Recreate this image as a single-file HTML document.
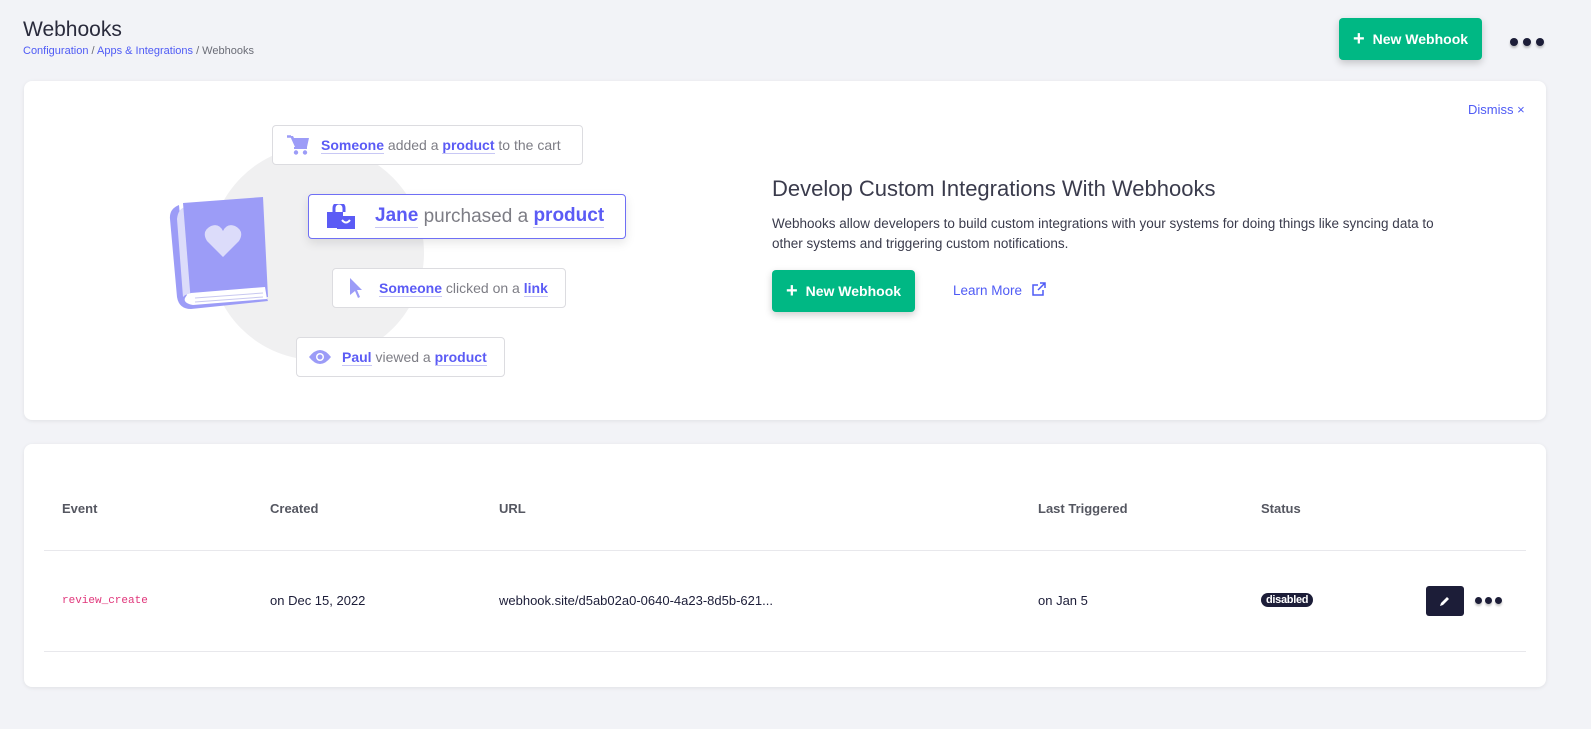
<!DOCTYPE html>
<html><head><style>
*{box-sizing:border-box;margin:0;padding:0}
body{width:1591px;height:729px;background:#f2f3f7;font-family:"Liberation Sans",sans-serif;position:relative;overflow:hidden;color:#1c1d38}
.abs{position:absolute}
.btn{background:#00b884;color:#fff;font-weight:bold;font-size:14px;border-radius:4px;box-shadow:0 3px 8px rgba(0,0,0,.2);display:flex;align-items:center;justify-content:center;gap:8px}
.card{background:#fff;border-radius:8px;box-shadow:0 1px 4px rgba(0,0,0,.08)}
.pill{position:absolute;background:#fff;border:1.5px solid #dcdce0;border-radius:4px;display:flex;align-items:center;color:#7d7d85;font-size:14px}
.pill b{color:#5b5bf5;font-weight:bold;border-bottom:1px solid #c8c8f5}
.dots{display:flex;gap:5px}.dots i{width:8px;height:8px;border-radius:50%;background:#1c1d38;box-shadow:0 2px 2px rgba(0,0,0,.25)}
.h{font-size:13px;font-weight:bold;color:#555761;position:absolute;top:501px}
.c{font-size:13px;color:#1c1d38;position:absolute;top:593px}
</style></head><body>
<div class="abs" style="left:23px;top:18px;font-size:21px;color:#2a2b3c">Webhooks</div>
<div class="abs" style="left:23px;top:45px;font-size:11px;color:#6b6d77"><span style="color:#4f5bf5">Configuration</span> / <span style="color:#4f5bf5">Apps &amp; Integrations</span> / Webhooks</div>
<div class="abs btn" style="left:1339px;top:18px;width:143px;height:42px"><span style="font-size:20px;font-weight:bold">+</span>New Webhook</div>
<div class="abs dots" style="left:1510px;top:38px"><i></i><i></i><i></i></div>

<div class="abs card" style="left:24px;top:81px;width:1522px;height:339px"></div>
<div class="abs" style="left:1468px;top:102px;font-size:13px;color:#4f5bf5">Dismiss ×</div>
<div class="abs" style="left:210px;top:146px;width:214px;height:214px;border-radius:50%;background:#f0f0f1"></div>
<svg class="abs" style="left:165px;top:197px" width="108" height="113" viewBox="0 0 108 113">
<path d="M14 8 Q4 12 5 22 L12 100 Q14 112 26 112 L103 104 L100 96 L22 100 Z" fill="#9c9cf7"/>
<path d="M12 22 Q13 12 20 10 L28 96 Q20 97 18 100 Z" fill="#dcdcfa"/>
<path d="M18 6 L98 0 L103 100 L26 106 Z" fill="#9c9cf7"/>
<path d="M26 96 L100 90 L102 102 L28 108 Q18 106 20 101 Q22 97 26 96Z" fill="#fff"/>
<path d="M30 101 L98 96 M30 105 L98 100" stroke="#c8c8f0" stroke-width="1"/>
<path d="M58 60 L42 44 Q36 34 46 29 Q54 26 58 34 Q62 26 70 29 Q80 34 74 44 Z" fill="#dcdcfa"/>
</svg>
<div class="pill" style="left:272px;top:125px;width:311px;height:40px"><svg style="margin:0 12px 0 14px" width="22" height="20" viewBox="0 0 22 20"><path d="M0 1.5h4" stroke="#9c9cf7" stroke-width="2.5"/><path d="M3 1h3l1 2h15l-2 9H8Z" fill="#9c9cf7"/><rect x="7" y="12" width="13" height="2" fill="#9c9cf7"/><circle cx="9" cy="17.5" r="2.2" fill="#9c9cf7"/><circle cx="18" cy="17.5" r="2.2" fill="#9c9cf7"/></svg><b>Someone</b>&nbsp;added a&nbsp;<b>product</b>&nbsp;to the cart</div>
<div class="pill" style="left:308px;top:194px;width:318px;height:45px;border-color:#6f6ff5;font-size:19px;box-shadow:0 4px 10px rgba(0,0,0,.1)"><svg style="margin:0 20px 0 18px" width="28" height="26" viewBox="0 0 28 26"><path d="M7 8V4a5 5 0 0 1 10 0v4" stroke="#5b5bf5" stroke-width="3" fill="none"/><rect x="0" y="8" width="16" height="16" fill="#5b5bf5"/><rect x="10" y="12" width="18" height="13" fill="#5b5bf5"/><path d="M15 16q4 5 8 0" stroke="#fff" stroke-width="2" fill="none"/></svg><b>Jane</b>&nbsp;purchased a&nbsp;<b>product</b></div>
<div class="pill" style="left:332px;top:268px;width:234px;height:40px"><svg style="margin:0 16px 0 16px" width="14" height="20" viewBox="0 0 14 20"><path d="M1 0L13 12H8l3 7-2 1-3-7-5 4Z" fill="#9c9cf7"/></svg><b>Someone</b>&nbsp;clicked on a&nbsp;<b>link</b></div>
<div class="pill" style="left:296px;top:337px;width:209px;height:40px"><svg style="margin:0 11px 0 12px" width="22" height="16" viewBox="0 0 22 16"><path d="M0 8Q11-6 22 8Q11 22 0 8Z" fill="#9c9cf7"/><circle cx="11" cy="8" r="4" fill="#fff"/><circle cx="11" cy="8" r="2.5" fill="#9c9cf7"/></svg><b>Paul</b>&nbsp;viewed a&nbsp;<b>product</b></div>

<div class="abs" style="left:772px;top:176px;font-size:22px;color:#3a3b4c">Develop Custom Integrations With Webhooks</div>
<div class="abs" style="left:772px;top:214px;width:690px;font-size:13.5px;line-height:20px;color:#3a3b4c">Webhooks allow developers to build custom integrations with your systems for doing things like syncing data to other systems and triggering custom notifications.</div>
<div class="abs btn" style="left:772px;top:270px;width:143px;height:42px"><span style="font-size:20px">+</span>New Webhook</div>
<div class="abs" style="left:953px;top:282px;font-size:13.5px;color:#4f5bf5">Learn More <svg width="14" height="14" viewBox="0 0 14 14" style="margin-left:6px;vertical-align:-1px"><path d="M11 8v5H1V3h5M8 1h5v5M13 1L6 8" stroke="#4f5bf5" stroke-width="1.5" fill="none"/></svg></div>

<div class="abs card" style="left:24px;top:444px;width:1522px;height:243px"></div>
<div class="h" style="left:62px">Event</div><div class="h" style="left:270px">Created</div><div class="h" style="left:499px">URL</div><div class="h" style="left:1038px">Last Triggered</div><div class="h" style="left:1261px">Status</div>
<div class="abs" style="left:44px;top:550px;width:1482px;height:1px;background:#e8e8ec"></div>
<div class="abs" style="left:44px;top:651px;width:1482px;height:1px;background:#e8e8ec"></div>
<div class="c" style="left:62px;top:595px;font-family:'Liberation Mono',monospace;font-size:11px;color:#e0357a">review_create</div>
<div class="c" style="left:270px">on Dec 15, 2022</div>
<div class="c" style="left:499px">webhook.site/d5ab02a0-0640-4a23-8d5b-621...</div>
<div class="c" style="left:1038px">on Jan 5</div>
<div class="abs" style="left:1261px;top:593px;background:#1c1d38;color:#fff;font-size:11px;font-weight:bold;padding:1px 5px;border-radius:8px;letter-spacing:-0.3px">disabled</div>
<div class="abs" style="left:1426px;top:586px;width:38px;height:30px;background:#1c1d38;border-radius:3px;display:flex;align-items:center;justify-content:center"><svg width="12" height="12" viewBox="0 0 12 12"><path d="M1 11l1-3 6-6 2 2-6 6Z" fill="#fff"/></svg></div>
<div class="abs dots" style="left:1475px;top:597px;gap:3px"><i style="width:7px;height:7px"></i><i style="width:7px;height:7px"></i><i style="width:7px;height:7px"></i></div>
</body></html>
